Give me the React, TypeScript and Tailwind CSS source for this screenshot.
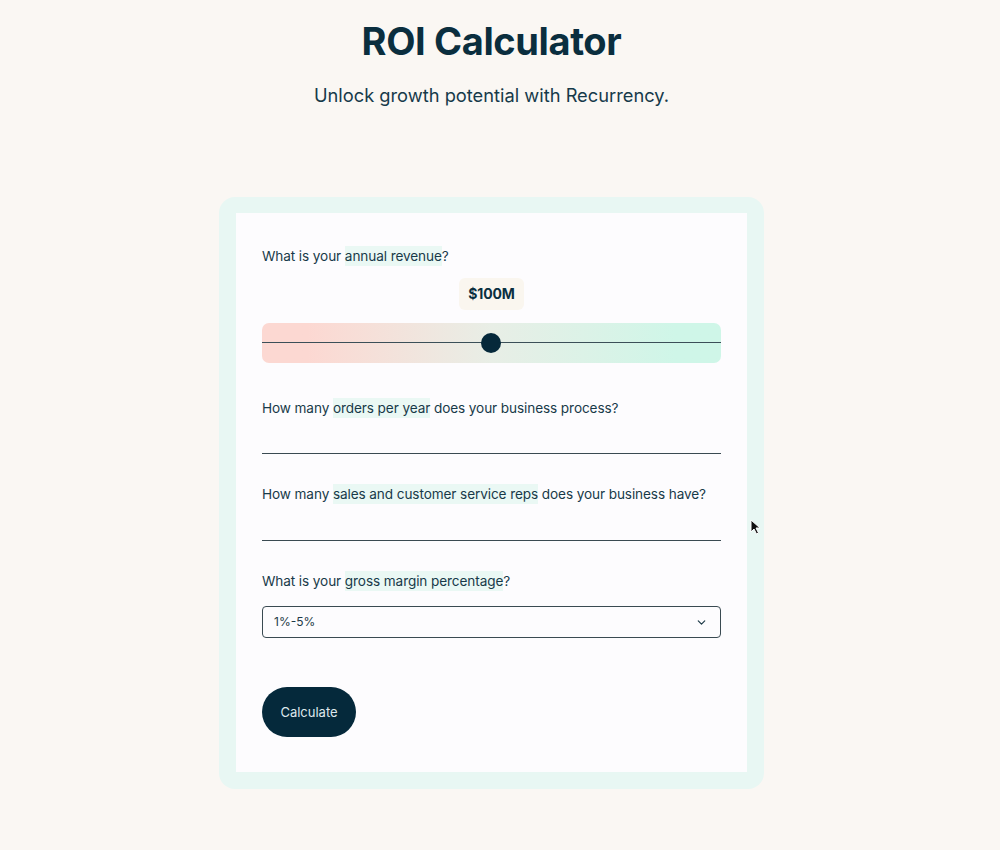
import { ChevronDown } from "lucide-react";

const font = { fontFamily: "Inter, 'Noto Sans', sans-serif" };

function Mark({ children }: { children: React.ReactNode }) {
  return <span className="bg-[#eaf8f4] py-[2px]">{children}</span>;
}

export default function App() {
  return (
    <div className="relative min-h-[850px] w-full bg-[#faf7f3] text-[#0b2f3f]" style={font}>
      <div className="flex flex-col items-center pt-[18px] pr-[17px]">
        <h1 className="text-[38px] font-bold tracking-[-0.01em] leading-[46px] text-[#0a2e3e]">ROI Calculator</h1>
        <p className="mt-[19px] text-[18.3px] leading-[24px] text-[#163a4a]">Unlock growth potential with Recurrency.</p>
      </div>

      <div className="ml-[219px] mt-[90px] w-[545px] rounded-[16px] bg-[#e8f7f3] px-[17px] pt-[16px] pb-[17px]">
        <div className="bg-[#fdfcfe] px-[26px] pt-[33px] pb-[35px] text-[13.6px] leading-[20px] tracking-[-0.1px] text-[#183a49]">
          <div>
            What is your <Mark>annual revenue</Mark>?
          </div>

          <div className="mt-[12px] flex justify-center">
            <span className="rounded-[6px] bg-[#faf6ef] px-[9px] py-[6px] text-[14px] font-bold leading-[20px] text-[#0b2f3f]">
              $100M
            </span>
          </div>

          <div className="relative mt-[13px] h-[40px] rounded-[7px] bg-gradient-to-r from-[#fcd8d2] from-10% via-[#e8eee6] via-50% to-[#cff6e8] to-90%">
            <div className="absolute left-0 right-0 top-[19px] h-[1px] bg-[#3b4f58]" />
            <div className="absolute left-[219px] top-[10px] h-[20px] w-[20px] rounded-full bg-[#05283a]" />
          </div>

          <div className="mt-[35px]">
            How many <Mark>orders per year</Mark> does your business process?
          </div>
          <div className="mt-[35px] h-[1px] bg-[#3a4a52]" />

          <div className="mt-[30px]">
            How many <Mark>sales and customer service reps</Mark> does your business have?
          </div>
          <div className="mt-[36px] h-[1px] bg-[#3a4a52]" />

          <div className="mt-[30px]">
            What is your <Mark>gross margin percentage</Mark>?
          </div>
          <div className="mt-[15px] flex h-[32px] items-center justify-between rounded-[4px] border border-[#3a4a52] pl-[11px] pr-[12px]">
            <span className="text-[12px] tracking-normal text-[#1e3a47]">1%-5%</span>
            <ChevronDown size={13} strokeWidth={2.2} className="text-[#1e3a47]" />
          </div>

          <button className="mt-[49px] flex h-[50px] w-[94px] items-center justify-center rounded-full bg-[#05293b] text-[13px] tracking-normal text-[#dfe8ec]">
            Calculate
          </button>
        </div>
      </div>

      <svg className="absolute left-[750px] top-[519px]" width="12" height="17" viewBox="0 0 12 17">
        <path d="M1 1 L1 13 L4 10 L6.5 15 L8.5 14 L6 9 L10 9 Z" fill="#111" stroke="#fff" strokeWidth="1" />
      </svg>
    </div>
  );
}
